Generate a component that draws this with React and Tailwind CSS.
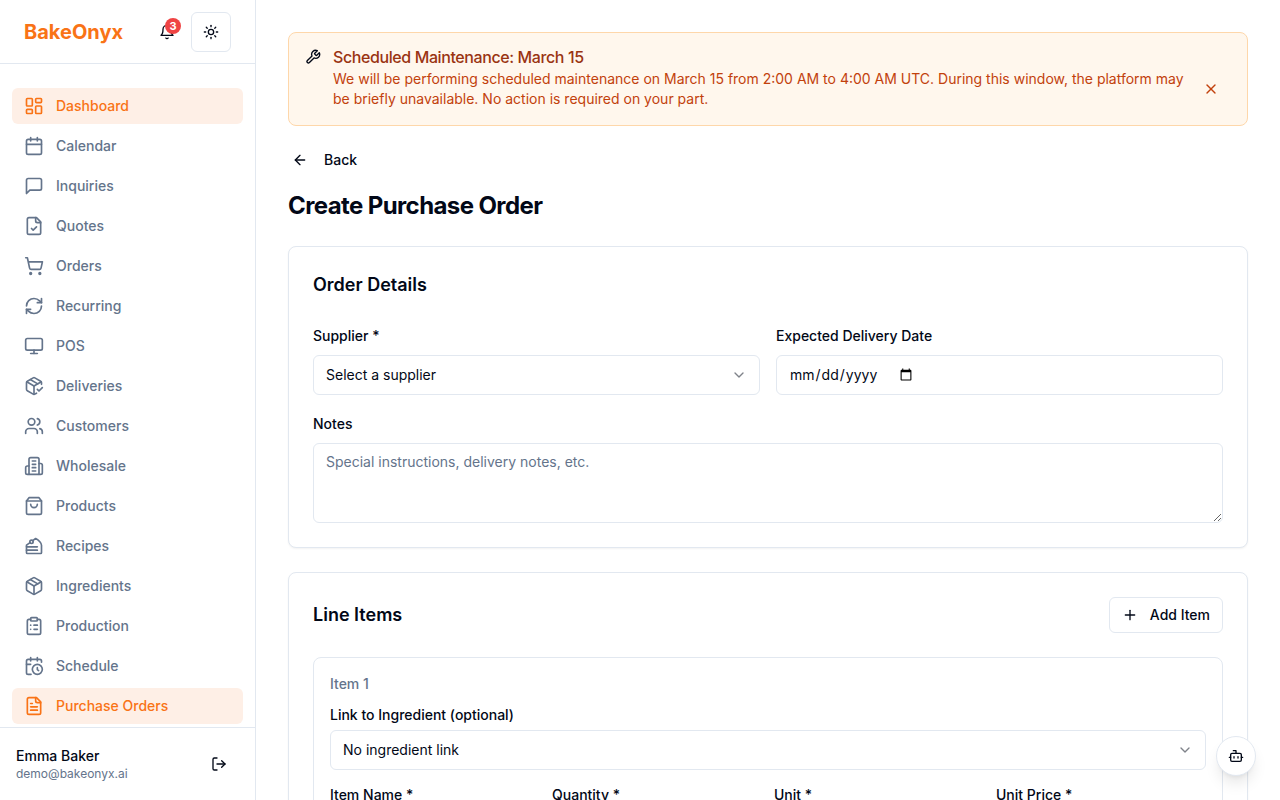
import React from "react";
import {
  ArrowLeft,
  Calendar,
  ChevronDown,
  ClipboardList,
  LayoutDashboard,
  Monitor,
  Plus,
  RefreshCw,
  ShoppingCart,
  Sun,
  Users,
  X,
} from "lucide-react";

function makeIcon(children) {
  return function Icon({ className }) {
    return (
      <svg
        viewBox="0 0 24 24"
        fill="none"
        stroke="currentColor"
        strokeWidth="2"
        strokeLinecap="round"
        strokeLinejoin="round"
        aria-hidden="true"
        className={className}
      >
        {children}
      </svg>
    );
  };
}

const Bell = makeIcon(
  <>
    <path d="M6 8a6 6 0 0 1 12 0c0 7 3 9 3 9H3s3-2 3-9" />
    <path d="M10.3 21a1.94 1.94 0 0 0 3.4 0" />
  </>
);
const Message = makeIcon(
  <path d="M21 15a2 2 0 0 1-2 2H7l-4 4V5a2 2 0 0 1 2-2h14a2 2 0 0 1 2 2z" />
);
const FileCheck = makeIcon(
  <>
    <path d="M15 2H6a2 2 0 0 0-2 2v16a2 2 0 0 0 2 2h12a2 2 0 0 0 2-2V7Z" />
    <path d="M14 2v4a2 2 0 0 0 2 2h4" />
    <path d="m9 15 2 2 4-4" />
  </>
);
const FileText = makeIcon(
  <>
    <path d="M15 2H6a2 2 0 0 0-2 2v16a2 2 0 0 0 2 2h12a2 2 0 0 0 2-2V7Z" />
    <path d="M14 2v4a2 2 0 0 0 2 2h4" />
    <path d="M10 9H8" />
    <path d="M16 13H8" />
    <path d="M16 17H8" />
  </>
);
const Package = makeIcon(
  <>
    <path d="m7.5 4.27 9 5.15" />
    <path d="M21 8a2 2 0 0 0-1-1.73l-7-4a2 2 0 0 0-2 0l-7 4A2 2 0 0 0 3 8v8a2 2 0 0 0 1 1.73l7 4a2 2 0 0 0 2 0l7-4A2 2 0 0 0 21 16Z" />
    <path d="m3.3 7 8.7 5 8.7-5" />
    <path d="M12 22V12" />
  </>
);
const PackageCheck = makeIcon(
  <>
    <path d="m16 16 2 2 4-4" />
    <path d="M21 10V8a2 2 0 0 0-1-1.73l-7-4a2 2 0 0 0-2 0l-7 4A2 2 0 0 0 3 8v8a2 2 0 0 0 1 1.73l7 4a2 2 0 0 0 2 0l2-1.14" />
    <path d="m7.5 4.27 9 5.15" />
    <path d="M3.29 7 12 12l8.71-5" />
    <path d="M12 22V12" />
  </>
);
const Building = makeIcon(
  <>
    <path d="M6 22V4a2 2 0 0 1 2-2h8a2 2 0 0 1 2 2v18Z" />
    <path d="M6 12H4a2 2 0 0 0-2 2v6a2 2 0 0 0 2 2h2" />
    <path d="M18 9h2a2 2 0 0 1 2 2v9a2 2 0 0 1-2 2h-2" />
    <path d="M10 6h4" />
    <path d="M10 10h4" />
    <path d="M10 14h4" />
    <path d="M10 18h4" />
  </>
);
const ShoppingBag = makeIcon(
  <>
    <path d="M6 2 3 6v14a2 2 0 0 0 2 2h14a2 2 0 0 0 2-2V6l-3-4Z" />
    <path d="M3 6h18" />
    <path d="M16 10a4 4 0 0 1-8 0" />
  </>
);
const CakeSlice = makeIcon(
  <>
    <circle cx="9" cy="7" r="2" />
    <path d="M7.2 7.9 3 11v9c0 .6.4 1 1 1h16c.6 0 1-.4 1-1v-9c0-2-3-6-7-8l-3.6 2.6" />
    <path d="M16 13H3" />
    <path d="M16 17H3" />
  </>
);
const CalendarClock = makeIcon(
  <>
    <path d="M21 7.5V6a2 2 0 0 0-2-2H5a2 2 0 0 0-2 2v14a2 2 0 0 0 2 2h3.5" />
    <path d="M16 2v4" />
    <path d="M8 2v4" />
    <path d="M3 10h5" />
    <path d="M17.5 17.5 16 16.3V14" />
    <circle cx="16" cy="16" r="6" />
  </>
);
const Wrench = makeIcon(
  <path d="M14.7 6.3a1 1 0 0 0 0 1.4l1.6 1.6a1 1 0 0 0 1.4 0l3.77-3.77a6 6 0 0 1-7.94 7.94l-6.91 6.91a2.12 2.12 0 0 1-3-3l6.91-6.91a6 6 0 0 1 7.94-7.94l-3.76 3.76z" />
);
const LogOut = makeIcon(
  <>
    <path d="M9 21H5a2 2 0 0 1-2-2V5a2 2 0 0 1 2-2h4" />
    <path d="m16 17 5-5-5-5" />
    <path d="M21 12H9" />
  </>
);
const Bot = makeIcon(
  <>
    <path d="M12 8V4H8" />
    <rect width="16" height="12" x="4" y="8" rx="2" />
    <path d="M2 14h2" />
    <path d="M20 14h2" />
    <path d="M15 13v2" />
    <path d="M9 13v2" />
  </>
);

const NAV = [
  { label: "Dashboard", icon: LayoutDashboard, active: true },
  { label: "Calendar", icon: Calendar },
  { label: "Inquiries", icon: Message },
  { label: "Quotes", icon: FileCheck },
  { label: "Orders", icon: ShoppingCart },
  { label: "Recurring", icon: RefreshCw },
  { label: "POS", icon: Monitor },
  { label: "Deliveries", icon: PackageCheck },
  { label: "Customers", icon: Users },
  { label: "Wholesale", icon: Building },
  { label: "Products", icon: ShoppingBag },
  { label: "Recipes", icon: CakeSlice },
  { label: "Ingredients", icon: Package },
  { label: "Production", icon: ClipboardList },
  { label: "Schedule", icon: CalendarClock },
  { label: "Purchase Orders", icon: FileText, active: true },
];

function Sidebar() {
  return (
    <aside className="flex w-64 shrink-0 flex-col border-r border-[#e2e8f0] bg-white">
      <div className="flex h-16 shrink-0 items-center justify-between border-b border-[#e2e8f0] px-6">
        <a href="#home" className="text-xl font-bold text-[#f97316]">
          BakeOnyx
        </a>
        <div className="flex items-center gap-1">
          <button
            type="button"
            aria-label="Notifications"
            className="relative flex size-10 items-center justify-center rounded-md"
          >
            <Bell className="size-4" />
            <span className="absolute top-1.5 right-1.5 flex size-4 items-center justify-center rounded-full bg-[#ef4444] text-[11px] leading-4 font-bold text-white">
              3
            </span>
          </button>
          <button
            type="button"
            aria-label="Toggle theme"
            className="flex size-10 items-center justify-center rounded-md border border-[#e2e8f0] bg-white"
          >
            <Sun className="size-4" />
          </button>
        </div>
      </div>
      <nav className="flex min-h-0 flex-1 flex-col gap-1 overflow-y-auto px-3 pt-6 [scrollbar-width:none]">
        {NAV.map(({ label, icon: Icon, active }) => (
          <a
            key={label}
            href="#nav"
            className={
              active
                ? "flex h-9 shrink-0 items-center gap-3 rounded-md bg-[#feefe6] px-3 text-sm font-medium text-[#f97316]"
                : "flex h-9 shrink-0 items-center gap-3 rounded-md px-3 text-sm font-medium text-[#64748b]"
            }
          >
            <Icon className="size-5" />
            {label}
          </a>
        ))}
      </nav>
      <div className="flex shrink-0 items-center justify-between border-t border-[#e2e8f0] p-4">
        <div>
          <p className="text-sm font-medium">Emma Baker</p>
          <p className="text-xs text-[#64748b]">demo@bakeonyx.ai</p>
        </div>
        <button
          type="button"
          aria-label="Log out"
          className="flex size-10 items-center justify-center rounded-md"
        >
          <LogOut className="size-4" />
        </button>
      </div>
    </aside>
  );
}

function Label({ htmlFor, children }) {
  return (
    <div>
      <label htmlFor={htmlFor} className="text-sm leading-none font-medium">
        {children}
      </label>
    </div>
  );
}

function Select({ id, children }) {
  return (
    <div className="relative">
      <select
        id={id}
        className="block h-10 w-full appearance-none rounded-md border border-[#e2e8f0] bg-white px-3 text-sm"
      >
        {children}
      </select>
      <ChevronDown className="pointer-events-none absolute top-3 right-[13px] size-4 opacity-50" />
    </div>
  );
}

function TextInput({ id, type = "text", ...rest }) {
  return (
    <input
      id={id}
      type={type}
      className="flex h-10 w-full rounded-md border border-[#e2e8f0] bg-white px-3 py-2 text-sm placeholder:text-[#64748b]"
      {...rest}
    />
  );
}

function Card({ children }) {
  return (
    <section className="mt-6 rounded-lg border border-[#e2e8f0] bg-white p-6 shadow-xs">
      {children}
    </section>
  );
}

export default function App() {
  return (
    <div className="flex h-screen bg-white font-['Inter',sans-serif] text-[#020817]">
      <Sidebar />
      <main className="min-w-0 flex-1 overflow-y-auto p-8 [scrollbar-width:none]">
        <div role="alert" className="flex gap-3 rounded-lg border border-[#fed7aa] bg-[#fff7ed] p-4">
          <Wrench className="size-4 shrink-0" />
          <div className="flex-1">
            <h5 className="mb-1 leading-none font-medium tracking-tight text-[#9a3412]">
              Scheduled Maintenance: March 15
            </h5>
            <div className="flex items-center justify-between text-sm text-[#c2410c]">
              <span>
                We will be performing scheduled maintenance on March 15 from 2:00 AM to 4:00 AM UTC.
                During this window, the platform may be briefly unavailable. No action is required
                on your part.
              </span>
              <button
                type="button"
                aria-label="Dismiss"
                className="flex size-10 shrink-0 items-center justify-center rounded-md"
              >
                <X className="size-4" />
              </button>
            </div>
          </div>
        </div>

        <button
          type="button"
          className="mt-4 flex h-9 items-center gap-4 rounded-md px-1 text-sm font-medium"
        >
          <ArrowLeft className="size-4" />
          Back
        </button>
        <h1 className="mt-3 text-2xl font-bold tracking-tight">Create Purchase Order</h1>

        <Card>
          <h2 className="text-lg leading-7 font-semibold">Order Details</h2>
          <div className="mt-6 grid grid-cols-2 gap-4">
            <div className="space-y-2">
              <Label htmlFor="supplier">Supplier *</Label>
              <Select id="supplier">
                <option>Select a supplier</option>
              </Select>
            </div>
            <div className="space-y-2">
              <Label htmlFor="delivery">Expected Delivery Date</Label>
              <TextInput id="delivery" type="date" />
            </div>
          </div>
          <div className="mt-4 space-y-2">
            <Label htmlFor="notes">Notes</Label>
            <textarea
              id="notes"
              placeholder="Special instructions, delivery notes, etc."
              className="block h-20 w-full rounded-md border border-[#e2e8f0] bg-white px-3 py-2 text-sm placeholder:text-[#64748b]"
            />
          </div>
        </Card>

        <Card>
          <div className="flex items-center justify-between">
            <h2 className="text-lg leading-7 font-semibold">Line Items</h2>
            <button
              type="button"
              className="flex h-9 items-center gap-3 rounded-md border border-[#e2e8f0] bg-white px-3 text-sm font-medium"
            >
              <Plus className="size-4" />
              Add Item
            </button>
          </div>
          <div className="mt-6 rounded-lg border border-[#e2e8f0] p-4">
            <p className="text-sm font-medium text-[#64748b]">Item 1</p>
            <div className="mt-2 space-y-1">
              <Label htmlFor="ingredient">Link to Ingredient (optional)</Label>
              <Select id="ingredient">
                <option>No ingredient link</option>
              </Select>
            </div>
            <div className="mt-3 grid grid-cols-4 gap-3">
              <div className="space-y-1">
                <Label htmlFor="item-name">Item Name *</Label>
                <TextInput id="item-name" />
              </div>
              <div className="space-y-1">
                <Label htmlFor="quantity">Quantity *</Label>
                <TextInput id="quantity" type="number" />
              </div>
              <div className="space-y-1">
                <Label htmlFor="unit">Unit *</Label>
                <TextInput id="unit" />
              </div>
              <div className="space-y-1">
                <Label htmlFor="unit-price">Unit Price *</Label>
                <TextInput id="unit-price" type="number" />
              </div>
            </div>
          </div>
        </Card>
      </main>
      <button
        type="button"
        aria-label="Open assistant"
        className="fixed right-6 bottom-6 flex size-10 items-center justify-center rounded-full border border-[#e2e8f0] bg-white shadow-lg"
      >
        <Bot className="size-4" />
      </button>
    </div>
  );
}
